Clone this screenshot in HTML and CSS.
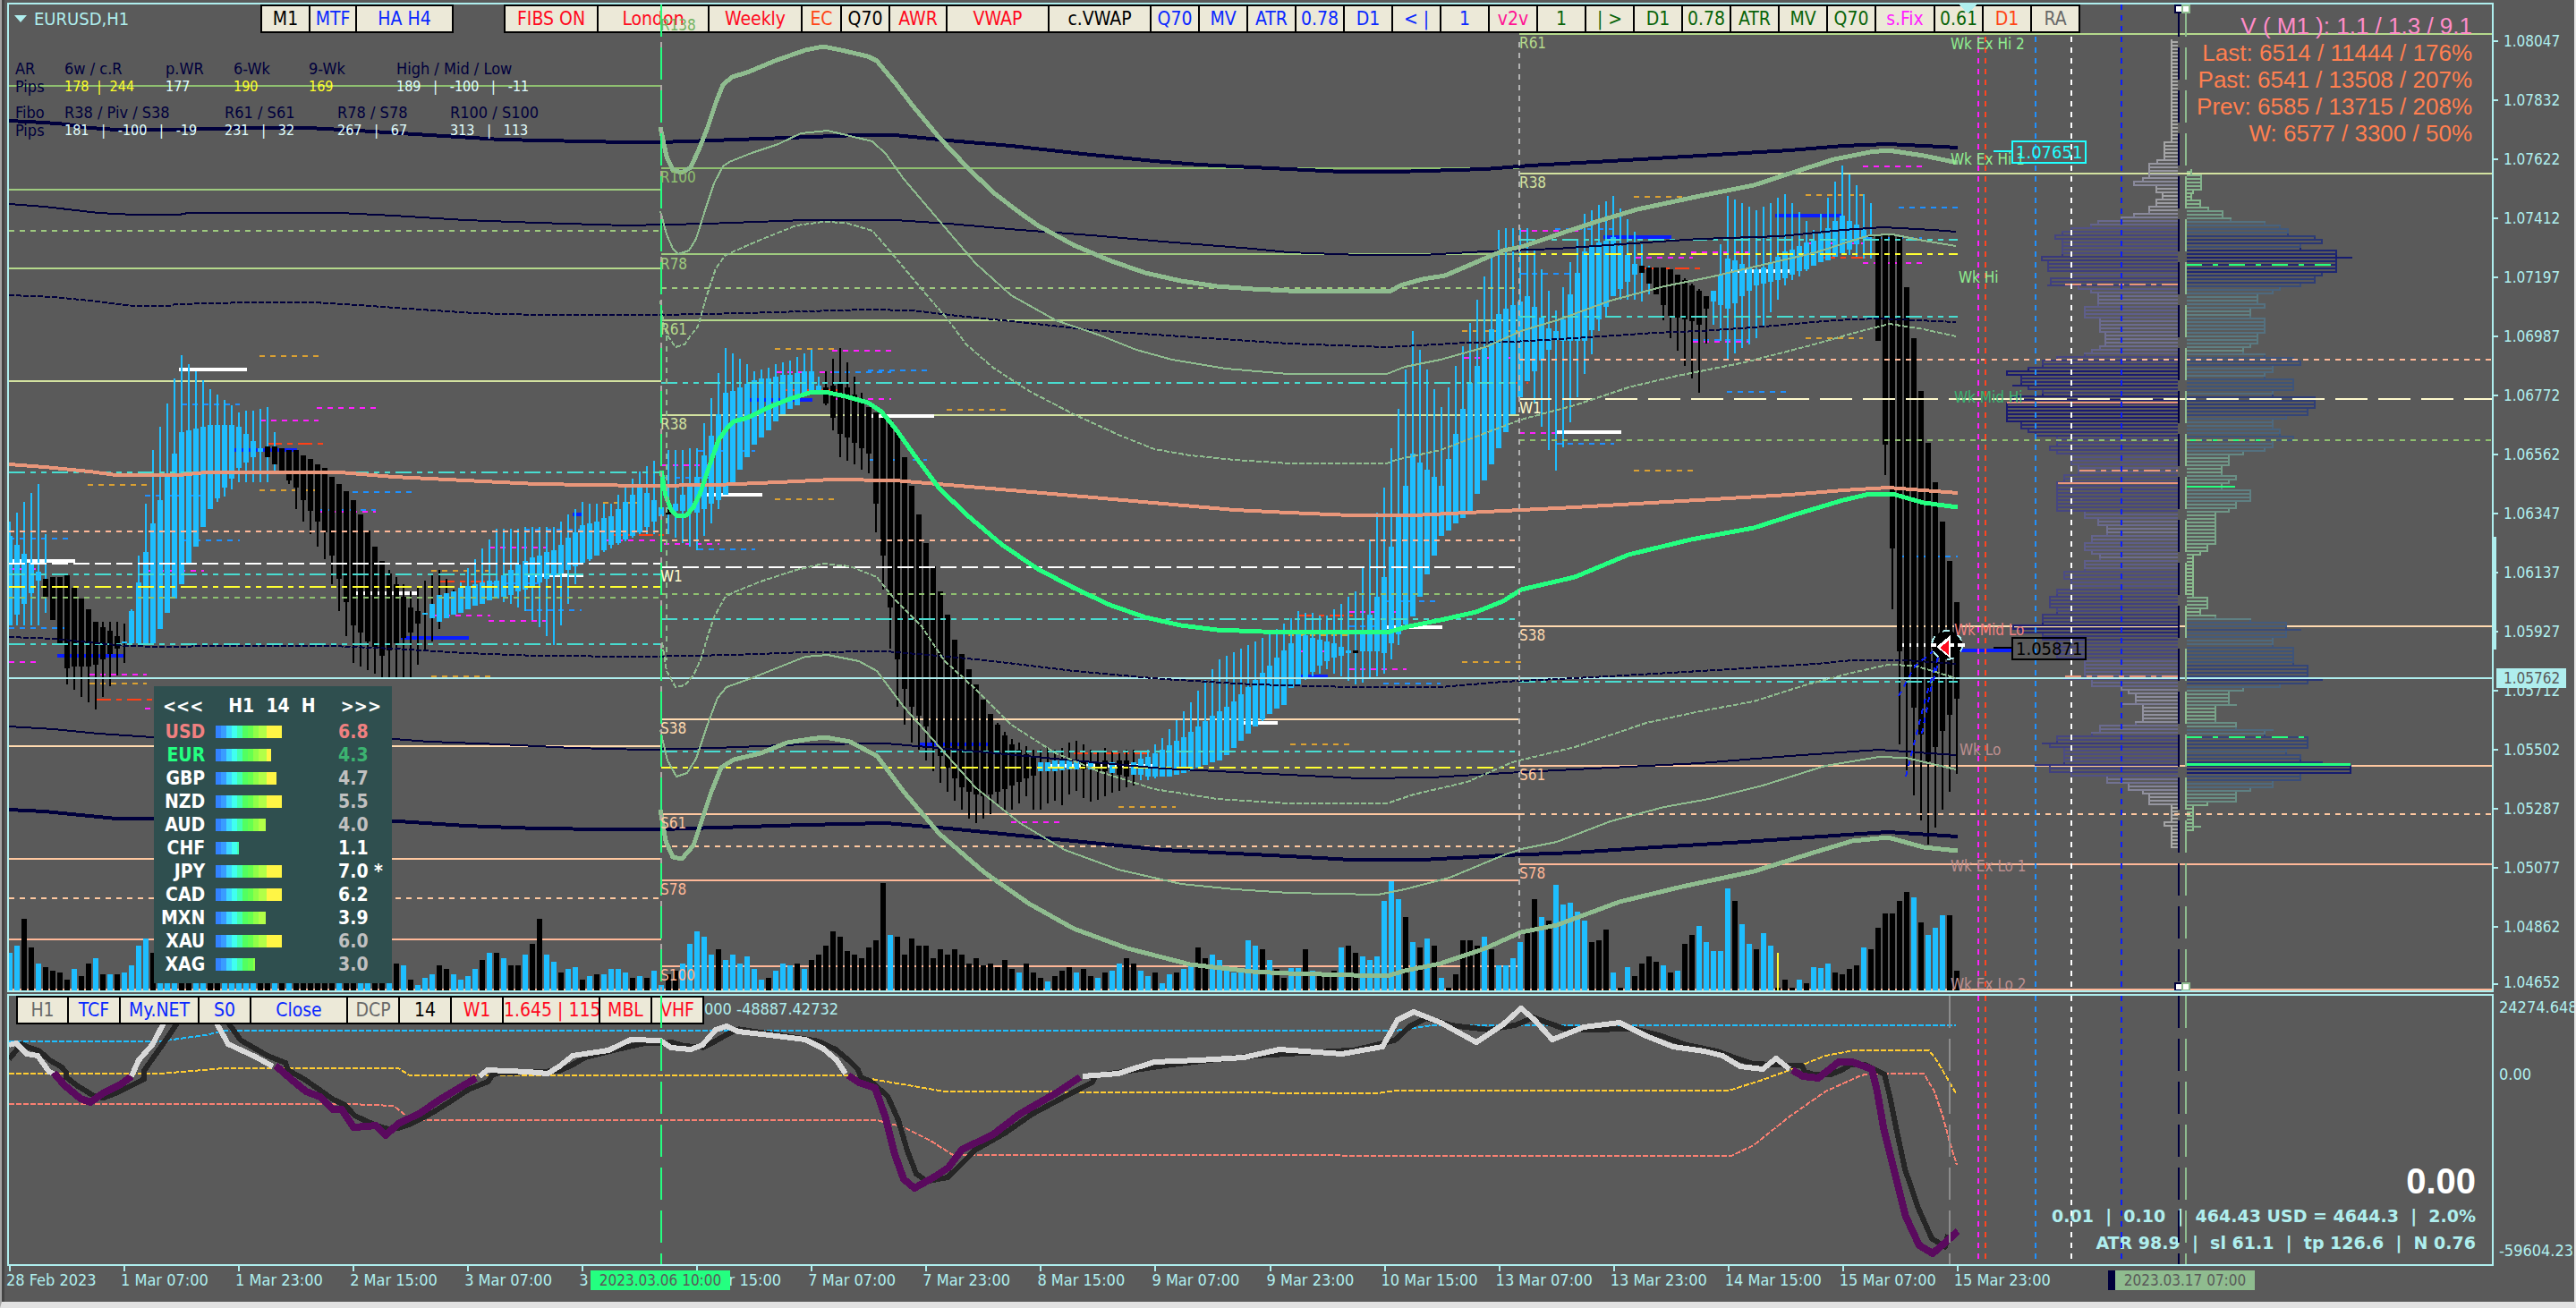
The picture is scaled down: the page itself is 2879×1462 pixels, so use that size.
FILE: index.html
```html
<!DOCTYPE html>
<html lang="en">
<head>
<meta charset="utf-8">
<title>EURUSD,H1</title>
<link rel="stylesheet" href="styles.css">
</head>
<body>
<main class="terminal">
  <section class="pane price-pane" aria-label="EURUSD H1 price chart">
    <div class="toolbar">
      <h1 class="symbol"><span class="caret"></span>EURUSD,H1</h1>
      <div class="group group-tf">
        <button class="b54">M1</button><button class="b52 blue">MTF</button><button class="b108 blue">HA H4</button>
      </div>
      <div class="group">
        <button class="b104 red">FIBS ON</button><button class="b124 red">London</button><button class="b104 red">Weekly</button><button class="b44 orange">EC</button><button class="b54">Q70</button><button class="b64 red">AWR</button><button class="b114 red">VWAP</button><button class="b114">c.VWAP</button><button class="b54 blue">Q70</button><button class="b54 blue">MV</button><button class="b54 blue">ATR</button><button class="b54 blue">0.78</button><button class="b54 blue">D1</button><button class="b54 blue">&lt; |</button><button class="b54 blue">1</button><button class="b54 pink">v2v</button><button class="b54 green">1</button><button class="b54 green">| &gt;</button><button class="b54 green">D1</button><button class="b54 green">0.78</button><button class="b54 green">ATR</button><button class="b54 green">MV</button><button class="b54 green">Q70</button><button class="b66 magenta">s.Fix</button><button class="b54 green">0.61</button><button class="b54 orange">D1</button><button class="b54 grey">RA</button>
      </div>
    </div>
    <svg id="price" class="layer" viewBox="10 5 2775 1102" preserveAspectRatio="none" aria-hidden="true"></svg>
    <div class="ranges">
      <table class="w586">
        <colgroup><col class="c55"><col class="c113"><col class="c76"><col class="c84"><col class="c98"><col class="c160"></colgroup>
        <tr><th>AR</th><th>6w / c.R</th><th>p.WR</th><th>6-Wk</th><th>9-Wk</th><th>High / Mid / Low</th></tr>
        <tr><th>Pips</th><td class="yellow">178&nbsp; |&nbsp; 244</td><td>177</td><td class="yellow">190</td><td class="yellow">169</td><td>189 &nbsp; | &nbsp; -100 &nbsp; | &nbsp; -11</td></tr>
      </table>
      <table class="w646">
        <colgroup><col class="c55"><col class="c179"><col class="c126"><col class="c126"><col class="c160"></colgroup>
        <tr><th>Fibo</th><th>R38 / Piv / S38</th><th>R61 / S61</th><th>R78 / S78</th><th>R100 / S100</th></tr>
        <tr><th>Pips</th><td>181 &nbsp; | &nbsp; -100 &nbsp; | &nbsp; -19</td><td>231 &nbsp; | &nbsp; 32</td><td>267 &nbsp; | &nbsp; 67</td><td>313 &nbsp; | &nbsp; 113</td></tr>
      </table>
    </div>
    <div class="volumes">
      <p class="rose">V ( M1 ): 1.1 / 1.3 / 9.1</p>
      <p>Last: 6514 / 11444 / 176%</p>
      <p>Past: 6541 / 13508 / 207%</p>
      <p>Prev: 6585 / 13715 / 208%</p>
      <p>W: 6577 / 3300 / 50%</p>
    </div>
    <aside class="strength">
      <header><button>&lt;&lt;&lt;</button><span>H1&nbsp; 14&nbsp; H</span><button>&gt;&gt;&gt;</button></header>
      <table>
        <tr class="down"><th>USD</th><td><i class="meter" style="width:74px"></i></td><td>6.8</td></tr>
        <tr class="up"><th>EUR</th><td><i class="meter" style="width:62px"></i></td><td>4.3</td></tr>
        <tr class="dim"><th>GBP</th><td><i class="meter" style="width:68px"></i></td><td>4.7</td></tr>
        <tr class="dim"><th>NZD</th><td><i class="meter" style="width:74px"></i></td><td>5.5</td></tr>
        <tr class="dim"><th>AUD</th><td><i class="meter" style="width:56px"></i></td><td>4.0</td></tr>
        <tr><th>CHF</th><td><i class="meter" style="width:26px"></i></td><td>1.1</td></tr>
        <tr><th>JPY</th><td><i class="meter" style="width:74px"></i></td><td>7.0 *</td></tr>
        <tr><th>CAD</th><td><i class="meter" style="width:74px"></i></td><td>6.2</td></tr>
        <tr><th>MXN</th><td><i class="meter" style="width:56px"></i></td><td>3.9</td></tr>
        <tr class="dim"><th>XAU</th><td><i class="meter" style="width:74px"></i></td><td>6.0</td></tr>
        <tr class="dim"><th>XAG</th><td><i class="meter" style="width:44px"></i></td><td>3.0</td></tr>
      </table>
    </aside>
  </section>

  <div class="price-scale">
    <ol class="prices">
      <li>1.08047</li><li>1.07832</li><li>1.07622</li><li>1.07412</li><li>1.07197</li><li>1.06987</li><li>1.06772</li><li>1.06562</li><li>1.06347</li><li>1.06137</li><li>1.05927</li><li>1.05712</li><li>1.05502</li><li>1.05287</li><li>1.05077</li><li>1.04862</li><li>1.04652</li>
    </ol>
    <span class="grip"></span>
    <output class="bid">1.05762</output>
  </div>

  <section class="pane flow-pane" aria-label="Money flow indicator">
    <svg id="flow" class="layer" viewBox="10 1113 2775 300" preserveAspectRatio="none" aria-hidden="true"></svg>
    <div class="toolbar">
      <div class="group">
        <button class="b57 grey">H1</button><button class="b58 blue">TCF</button><button class="b88 blue">My.NET</button><button class="b58 blue">S0</button><button class="b108 blue">Close</button><button class="b58 grey">DCP</button><button class="b58">14</button><button class="b58 red">W1</button><button class="b108 red">1.645 | 115</button><button class="b58 red">MBL</button><button class="b58 red">VHF</button>
      </div>
      <span class="reading">000 -48887.42732</span>
    </div>
    <div class="account">
      <strong>0.00</strong>
      <p>0.01 &nbsp;|&nbsp; 0.10 &nbsp;|&nbsp; 464.43 USD = 4644.3 &nbsp;|&nbsp; 2.0%</p>
      <p>ATR 98.9 &nbsp;|&nbsp; sl 61.1 &nbsp;|&nbsp; tp 126.6 &nbsp;|&nbsp; N 0.76</p>
    </div>
    <svg id="flow-lines" class="layer" viewBox="10 1113 2775 300" preserveAspectRatio="none" aria-hidden="true"></svg>
  </section>

  <ol class="flow-scale"><li>24274.648</li><li>0.00</li><li>-59604.232</li></ol>

  <div class="time-axis">
    <ol class="times">
      <li>28 Feb 2023</li><li>1 Mar 07:00</li><li>1 Mar 23:00</li><li>2 Mar 15:00</li><li>3 Mar 07:00</li><li>3 Mar 23:00</li><li>6 Mar 15:00</li><li>7 Mar 07:00</li><li>7 Mar 23:00</li><li>8 Mar 15:00</li><li>9 Mar 07:00</li><li>9 Mar 23:00</li><li>10 Mar 15:00</li><li>13 Mar 07:00</li><li>13 Mar 23:00</li><li>14 Mar 15:00</li><li>15 Mar 07:00</li><li>15 Mar 23:00</li>
    </ol>
    <time class="mark mark-start">2023.03.06 10:00</time>
    <time class="mark mark-end">2023.03.17 07:00</time>
  </div>
</main>
<script src="app.js"></script>
</body>
</html>
```
FILE: styles.css
```css
* { box-sizing: border-box; margin: 0; padding: 0; }
body {
  background: #5a5a5a;
  color: #afeeee;
  font: 18px/22px "DejaVu Sans Condensed", "DejaVu Sans", sans-serif;
}
ol { list-style: none; }

.terminal {
  display: grid;
  grid-template-columns: minmax(0, 1fr) 90px;
  grid-template-rows: minmax(0, 1106fr) minmax(0, 306fr) 40px;
  height: 100vh;
  min-height: 900px;
  padding: 3px 0 0 6px;
  border-left: 2px solid #a4a4a4;
  border-right: 2px solid #e8e8e8;
  border-bottom: 7px solid #e2e2e2;
  box-shadow: inset 3px 0 #444;
  overflow: hidden;
}
.pane { display: grid; border: 2px solid #afeeee; overflow: hidden; }
.pane > * { grid-area: 1 / 1; min-width: 0; min-height: 0; }
.flow-pane { margin-top: 2px; }
.layer { width: 100%; height: 100%; pointer-events: none; shape-rendering: crispEdges; }
.layer text { font: 17px "DejaVu Sans Condensed", "DejaVu Sans", sans-serif; }

/* toolbars */
.toolbar { display: flex; align-self: start; height: 32px; }
.symbol { display: flex; align-items: center; gap: 8px; flex: 0 0 281px; padding-left: 6px; font-size: 20px; font-weight: normal; }
.caret { border: 7px solid transparent; border-top: 8px solid #afeeee; border-bottom: 0; }
.group { display: flex; border-right: 2px solid #000; }
.group-tf { margin-right: 56px; }
.flow-pane .group { margin-left: 8px; }
.group button {
  flex: none;
  border: 2px solid #000;
  border-right: 0;
  background: #ece9d8;
  color: #000;
  font: 21px/24px "DejaVu Sans Condensed", "DejaVu Sans", sans-serif;
  white-space: nowrap;
}
.group .blue { color: #0a28ff; }
.group .red { color: #ff0a1e; }
.group .orange { color: #ff4516; }
.group .pink { color: #ff1493; }
.group .green { color: #0a640a; }
.group .magenta { color: #ff20ff; }
.group .grey { color: #696969; }
.b44 { width: 44px; } .b52 { width: 52px; } .b54 { width: 54px; } .b57 { width: 57px; }
.b58 { width: 58px; } .b64 { width: 64px; } .b66 { width: 66px; } .b88 { width: 88px; }
.b104 { width: 104px; } .b108 { width: 108px; } .b114 { width: 114px; } .b124 { width: 124px; }
.reading { padding-top: 4px; }

/* weekly ranges */
.ranges { display: grid; gap: 9px; align-content: start; justify-self: start; padding: 62px 0 0 7px; }
.ranges table { table-layout: fixed; border-collapse: collapse; }
.ranges th, .ranges td { height: 20px; text-align: left; font-weight: normal; white-space: nowrap; line-height: 20px; }
.ranges th { color: #00003c; font-size: 18px; }
.ranges td { color: #e0ffff; font-size: 16px; }
.ranges .yellow { color: #ffff28; }
.w586 { width: 586px; } .w646 { width: 644px; }
.c55 { width: 55px; } .c76 { width: 76px; } .c84 { width: 84px; } .c98 { width: 98px; } .c113 { width: 113px; }
.c126 { width: 126px; } .c160 { width: 160px; } .c179 { width: 179px; }

/* volume read-out */
.volumes { justify-self: end; padding: 9px 22px 0 0; text-align: right; color: #ff7f50; font: 26px/30px "Liberation Sans", sans-serif; }
.volumes .rose { color: #ff8cc8; }

/* currency strength */
.strength { align-self: end; justify-self: start; width: 266px; margin: 0 0 8px 162px; padding: 10px 10px 8px 8px; background: #2f4f4f; color: #fff; font-weight: bold; font-size: 21px; line-height: 26px; }
.strength header { display: flex; justify-content: space-between; padding: 0 2px 4px 2px; line-height: 24px; }
.strength button { border: 0; background: none; color: #fff; font: bold 20px/24px "DejaVu Sans Condensed", sans-serif; }
.strength table { width: 100%; border-collapse: collapse; }
.strength th { width: 46px; text-align: right; }
.strength tr { height: 26px; }
.strength td { line-height: 26px; }
.strength td:nth-child(2) { width: 152px; padding-left: 12px; }
.strength td:nth-child(3) { white-space: nowrap; }
.meter { display: block; height: 14px; background: linear-gradient(90deg, #3282ff 6px, #3a9cff 6px 12px, #3ed8ff 12px 18px, #40fff0 18px 24px, #42ffb0 24px 30px, #52ff60 30px 36px, #66ff50 36px 42px, #90ff48 42px 48px, #b2ff48 48px 57px, #fff545 57px); }
.down { color: #f08080; }
.up th { color: #24ff80; }
.up td { color: #3cb371; }
.dim td { color: #c0c0c0; }

/* account line */
.account { align-self: end; justify-self: end; padding: 0 18px 9px 0; text-align: right; font: bold 19px/30px "DejaVu Sans", sans-serif; white-space: nowrap; }
.account strong { display: block; color: #fff; font: bold 40px/48px "Liberation Sans", sans-serif; }

/* scales */
.price-scale { position: relative; overflow: hidden; }
.prices { display: grid; grid-template-rows: 10fr repeat(16, 66fr) 40fr; height: 100%; font-size: 17px; }
.prices::before { content: ""; }
.prices li { display: flex; align-items: center; gap: 6px; }
.prices li::before { content: ""; width: 5px; height: 2px; background: #afeeee; }
.prices li:last-child { align-items: end; }
.prices li:last-child::before { margin-bottom: 8px; }
.grip { position: absolute; left: 0; top: 54%; width: 3px; height: 126px; background: #afeeee; }
.bid { position: absolute; left: 3px; top: 67%; width: 78px; padding: 0 8px; margin-top: 3px; background: #afeeee; color: #5a5a5a; font-size: 17px; }
.flow-scale { display: grid; grid-template-rows: 6fr 22fr 53fr 22fr 175fr 22fr 6fr; overflow: hidden; padding-left: 6px; }
.flow-scale li:nth-child(1) { grid-row: 2; }
.flow-scale li:nth-child(2) { grid-row: 4; }
.flow-scale li:nth-child(3) { grid-row: 6; }

.time-axis { display: grid; grid-column: 1 / -1; margin-right: 90px; }
.time-axis > * { grid-area: 1 / 1; }
.times { display: grid; grid-template-columns: repeat(21, 128fr) 90fr; }
.times li { padding-top: 5px; text-indent: -1px; white-space: nowrap; background: linear-gradient(#afeeee, #afeeee) 2px 0 / 2px 6px no-repeat; }
.mark { justify-self: start; align-self: start; width: 156px; height: 22px; margin-top: 5px; text-align: center; font-size: 17px; color: #5a5a5a; }
.mark-start { margin-left: 652px; background: #24ff80; }
.mark-end { justify-self: end; margin-right: 267px; background: #8fbc8f; box-shadow: -8px 0 #00003c; }
```
FILE: app.js
```js
const NS = "http://www.w3.org/2000/svg";
const C = {
  sky: "#1ebeff", black: "#000", navy: "#00003c", sage: "#8fbc8f", salmon: "#e9967a", spring: "#24ff80",
  aqua: "#afeeee", teal: "#48dcd0", yellow: "#ffff32", magenta: "#ff20ff", gold: "#daa032", dodger: "#1e90ff",
  red: "#ff4016", blue: "#0a1eff", white: "#fff", cream: "#fffacd",
  g1: "#8fc070", g2: "#9fcb7f", g3: "#b5d98c", g4: "#d3e2a0",
  p1: "#ffdab0", p2: "#ffc8a0", p3: "#ffb898"
};
const DASH = "6 6", DOT = "18 6 6 6 6 6", LONG = "18 6";

function make(svg, tag, attrs, text) {
  const el = document.createElementNS(NS, tag);
  for (const k in attrs) if (attrs[k] !== undefined) el.setAttribute(k, attrs[k]);
  if (text) el.textContent = text;
  svg.appendChild(el);
  return el;
}
const line = (svg, x1, y1, x2, y2, stroke, width = 2, dash) =>
  make(svg, "line", { x1, y1, x2, y2, stroke, "stroke-width": width, "stroke-dasharray": dash });
const curve = (svg, pts, stroke, width, dash) =>
  make(svg, "polyline", { points: pts, fill: "none", stroke, "stroke-width": width, "stroke-dasharray": dash, "stroke-linejoin": "round" });
const box = (svg, x, y, width, height, fill) => make(svg, "rect", { x, y, width, height, fill });

const price = document.getElementById("price");
const LEFT = 10, MON6 = 739, MON13 = 1698, NOW = 2188, RIGHT = 2785, FLOOR = 1107, STEP = 8;
const barX = i => 11 + i * STEP;

/* weekly pivots, solid */
[
  [LEFT, MON6, 96, "g1"], [LEFT, MON6, 212, "g2"], [LEFT, MON6, 300, "g3"], [LEFT, MON6, 426, "g4"],
  [LEFT, MON6, 834, "p1"], [LEFT, MON6, 960, "p2"], [LEFT, MON6, 1050, "p3"],
  [MON6, MON13, 188, "g1"], [MON6, MON13, 284, "g2"], [MON6, MON13, 358, "g3"], [MON6, MON13, 464, "g4"],
  [MON6, MON13, 804, "p1"], [MON6, MON13, 910, "p2"], [MON6, MON13, 984, "p3"], [MON6, MON13, 1080, "p3"],
  [MON13, RIGHT, 38, "g3"], [MON13, RIGHT, 194, "g4"], [MON13, RIGHT, 700, "p1"], [MON13, RIGHT, 856, "p2"],
  [MON13, RIGHT, 966, "p3"], [LEFT, RIGHT, 1106, "p3"]
].forEach(([a, b, y, c]) => line(price, a, y, b, y, C[c]));

/* session levels: colour, from, to, y */
const levels = `g 290 356 398|w 200 276 413|d 203 268 452|m 291 356 470|m 354 420 456|r 299 364 496|b 262 332 503|g 98 164 542
d 162 226 554|g 290 352 548|d 394 460 550|d 355 420 570|m 357 420 572|d 10 77 602|d 206 268 604|w 10 84 627|m 10 40 636|m 165 228 638
w 397 466 663|b 448 524 713|d 10 72 702|b 64 138 733|m 485 548 688|m 546 610 694|g 482 547 638|r 492 550 650|m 547 610 612|d 586 648 592
b 640 650 575|w 590 652 643|d 550 610 652|d 588 650 682|g 674 720 562|r 680 748 598|m 678 738 604|m 10 40 740|m 100 164 754|g 100 164 764
r 108 172 782|m 162 172 792|g 482 548 756|g 866 932 390|m 930 996 392|m 868 930 416|d 932 996 416|d 970 1036 414|r 878 936 436|b 838 908 447
m 934 996 446|g 1058 1124 458|w 974 1044 465|d 780 844 504|m 740 804 520|d 742 802 534|d 972 1036 514|w 786 852 553|g 866 932 558
m 742 804 608|d 780 844 614|m 1700 1764 258|d 1738 1802 256|g 1826 1880 220|b 1792 1868 265|m 1828 1892 288|m 1890 1954 282|r 1838 1900 300
d 1700 1764 306|m 2082 2148 186|g 2018 2082 218|d 2122 2188 232|b 1984 2058 241|d 2085 2148 266|m 2020 2082 272|r 2035 2092 288
m 2082 2148 294|w 1935 2002 303|d 1892 1956 380|m 1892 1955 382|g 1634 1698 370|g 2018 2082 378|m 1636 1698 400|r 1650 1708 428
m 1698 1740 484|w 1738 1812 483|d 1740 1804 496|g 1826 1892 526|d 1930 1996 438|d 1550 1610 672|m 1508 1570 684|d 1508 1550 700
r 1452 1512 688|w 1550 1612 701|g 1440 1506 710|m 1440 1500 728|b 1448 1484 756|m 1508 1572 748|d 1546 1610 764|g 1634 1700 740
g 1442 1508 832|d 2126 2188 622|w 2126 2196 721|w 1387 1428 808|b 1028 1104 832|w 1170 1290 856|m 1130 1190 919|g 1250 1314 902|r 1200 1290 842`;
const levelStyle = { g: ["gold", 2, DASH], m: ["magenta", 2, DASH], d: ["dodger", 2, DASH], r: ["red", 2, "16 6 6 6"], w: ["white", 4], b: ["blue", 4] };
levels.split(/[|\n]/).forEach(s => {
  const [k, a, b, y] = s.split(" ");
  const [c, w, d] = levelStyle[k];
  line(price, a, y, b, y, C[c], w, d);
});

/* tick volume: bar height above the floor, b = up bar, k = down bar */
const volume = `b42 b50 k80 k48 b30 k26 k22 k20 k12 b24 k16 k30 b36 k18 b18 k18 b20 b28 b50 b58 k42 b20 b20 b20 k20 k20 b20 b20 k20 k20 b20 b20 b20 b8
b14 k20 k20 b20 k20 b20 k20 k20 k20 k20 k20 k20 b20 k20 k20 b20 b20 k20 k20 b20 k30 b28 k12 b6 b14 b18 k28 k24 b18 b12 b16 b24 k34 b42 k42 b36 k28
k28 b40 k52 k80 b40 b32 k20 b24 b26 k12 b16 k18 b18 b24 b24 b20 k14 b16 k14 b22 b6 k18 k22 b30 b52 b66 b60 b40 k46 b34 b40 b30 b38 b24 b12 k14 b22
b30 b28 k30 b24 k34 k40 k50 k66 k60 k44 k40 k36 k48 k56 k120 b62 k60 k40 k58 k50 k50 k36 k46 k40 k46 k40 k30 k36 k28 k30 k26 k34 k24 b20 k30 k20 k14
b10 k16 k22 k26 b20 k24 k16 b14 k20 b22 b30 k36 k30 b22 b16 k20 b8 b18 k20 b24 b30 k48 k36 b40 b34 b26 b20 b24 b56 b50 k46 b34 k24 k14 b12 k38 b34
b48 b38 b30`.split(/\s+/).slice(0, 179);
const later = `b25 b25 k46 b22 k16 k16 k22 b48 k50 k42 b38 b34 b38 b100 b122 b102 k82 b54 k48 b58 k50 b14 k3 k18 k56 k56 k50 b60 k46 b28 b28 b36 b54
k66 k102 b82 k78 b118 b96 b98 b88 b78 k54 k56 k68 b20 k3 b26 k16 k30 k38 k32 b28 k20 b22 k52 k62 b72 b54 b44 b44 b114 k100 b74 b52 k46 b64 b50
k3 k12 k3 b12 k8 b26 b25 b30 k20 k18 k24 k28 b48 k46 k70 k86 k86 k100 k110 b104 k76 b62 b70 b84 k84 k22`.split(/\s+/);
const drawVolume = (v, i) => box(price, barX(i) - 3, FLOOR - v.slice(1), 6, v.slice(1), v[0] === "b" ? C.sky : C.black);
while (volume.length < 179) volume.push("b24");
volume.concat(later).slice(0, 273).forEach(drawVolume);
line(price, 1987, 1065, 1987, FLOOR, C.yellow);

/* candles: wick top, body top, body bottom, wick bottom.
   b = up, k = down, x = down body on an up wick, y = up body on a down wick */
const blocks = [
  { base: 370, unit: 3, rows: `b638,686,986,986 b608,716,950,986 b572,746,914,986 b542,776,878,986 b512,806,836,986 x680,830,890,944 k824,824,968,968
k824,824,1046,1046 k818,818,1130,1184 k860,860,1124,1202 k896,896,1124,1226 k932,932,1124,1244 k974,974,1118,1268 k974,992,1100,1226
k974,1004,1082,1190 k974,1022,1064,1154 y980,1040,1046,1112 b932,938,1046,1046 b752,842,1046,1046 b578,740,1046,1046 b398,644,1046,1046
b320,566,998,998 b242,488,944,944 b158,410,896,896 b80,338,848,848 b110,332,776,776 b134,326,722,722 b164,320,656,656 b194,314,596,596
b212,314,560,572 b230,314,524,554 b248,314,494,530 b272,320,458,506 b266,344,440,506 b266,368,422,506 b260,392,404,506 x254,386,422,506
x338,386,446,470 k392,392,470,470 k398,398,500,512 k398,398,524,596 k416,416,566,638 k428,428,602,680 k446,446,638,722 k458,458,674,764
k488,488,752,848 k512,512,830,938 k536,536,908,1022 k566,566,986,1112 k614,614,1010,1124 k668,668,1040,1136 k722,722,1058,1148
k770,770,1088,1160 k800,812,1070,1160 k824,848,1046,1160 k848,890,1028,1160 k872,926,1010,1160 k860,938,980,1118 y836,944,950,1070
y818,914,962,1040 y800,884,974,998 y830,878,962,962 y866,872,950,950 b842,860,944,944 b794,854,932,932 b764,848,920,920 b728,842,914,914
b698,836,902,902 b662,836,896,896 b662,818,890,908 b662,800,884,914 b662,782,872,926 b656,770,866,938 b656,758,854,968 b656,752,842,992
b656,740,830,1022 b656,734,818,1052 b638,716,812,986 b614,692,800,914 b596,674,788,848 b572,650,776,776 b578,644,764,770 b578,638,752,752
b578,626,734,740 b578,620,716,728 b548,596,710,716 b524,572,698,704 b494,548,686,692 b470,524,674,680 b452,542,656,680 b434,566,638,680
b470,590,620,630 x398,596,614,680 b398,578,602,692 b398,548,602,710 b392,520,605,722 b392,488,608,734 b308,416,596,686 b224,350,578,644
b140,278,566,596 b56,206,548,548 b74,200,506,506 b92,188,464,464 b110,176,422,422 b134,164,380,380 b128,158,356,356 b122,158,332,332
b110,152,302,302 b104,146,278,278 b98,146,260,260 b86,140,248,248 b74,134,215,215 b62,134,210,210 b152,182,212,212 k134,188,242,248
k92,182,290,332 k56,176,344,422 k104,188,356,434 k152,212,374,446 k206,230,392,464 k254,254,410,476 k272,272,578,674 k290,290,752,866
k300,300,926,1064` },
  { base: 0, unit: 1, rows: `k483,483,737,790 k511,511,770,810 k543,543,790,830 k575,575,800,838 k607,607,812,850 k633,633,830,862 k661,661,845,875
k687,687,858,885 k715,715,870,895 k731,731,880,905 k748,748,885,915 k765,765,888,920 k782,782,890,915 k798,798,888,910 k808,810,885,900
k818,822,882,905 k826,832,878,905 k830,838,874,898 k834,843,870,890 k838,846,867,905 y838,852,862,905 y836,852,862,898 y838,850,862,895
y836,850,861,900 y830,850,860,888 y828,850,860,884 k832,852,860,892 y838,852,860,896 k840,852,862,894 k836,850,862,890 y840,852,864,886
k842,850,866,884 k838,850,868,880 y838,852,866,878 b840,848,866,872 b838,846,868,872 b832,842,868,870 b825,838,868,868 b815,833,868,868
b805,828,866,866 b795,824,864,864 b785,818,862,862 b772,812,858,858 b760,806,855,855 b748,800,852,852 b737,795,850,850 b733,790,844,844
b729,784,836,836 b725,776,828,828 b721,768,820,820 b717,760,812,812 b713,752,804,806 b709,744,798,798 b703,735,792,792 b697,727,788,788` },
  { base: 370, unit: 2.148, rows: `b690,750,856,856 b672,724,848,848 b677,731,832,838 b677,737,818,830 b682,741,804,822 b682,745,793,813 b668,750,784,822
b655,758,780,830 b638,767,774,840 x625,767,774,848 b568,718,770,844 b500,681,770,835 b436,638,770,830 b376,591,774,822 b281,518,750,788
b187,440,728,754 b93,372,705,718 b0,295,685,685 b45,316,638,638 b92,333,585,585 b140,350,539,539 b183,372,492,492 b135,307,478,478
b84,247,461,461 b37,187,448,448` },
  { base: 0, unit: 1, rows: `b361,428,571,571 b335,409,552,552 b309,389,537,537 b283,368,519,519 b257,351,501,501 b255,345,483,483 b255,341,463,463
b255,337,444,444 b255,331,426,426 b279,343,415,451 b301,355,403,477 b325,367,391,503 b347,370,380,526 b321,357,381,500 b293,329,381,472
b269,305,381,444 b239,281,381,418 b235,275,369,396 b229,271,357,370 b225,269,343,353 b219,265,331,331 b233,275,323,335 b245,285,315,335
b259,295,307,335 x273,297,305,337 x297,299,317,329 k299,299,329,329 k299,299,341,358 k301,301,353,378 k307,307,355,392 k311,313,357,409
k317,319,359,423 k323,325,363,439 k331,331,345,384 b325,325,337,363 b273,307,341,381 b219,289,345,403 b223,291,339,395 b227,295,331,389
b231,299,325,385 b235,301,319,378 b231,299,317,365 b227,293,315,349 b221,287,313,335 b217,281,311,319 b227,279,307,313 b237,275,303,309
b247,271,301,303 b257,269,297,297 b239,261,293,293 b221,255,291,291 b203,247,287,287 b185,241,283,283 b195,247,279,285 b207,251,273,287
b217,257,267,289 x227,263,265,289 k263,263,381,381 k263,263,497,531 k263,263,613,681 k265,265,728,832 k321,321,760,861 k378,378,791,889
k437,437,821,917 k495,495,851,944 k539,539,835,925 k583,583,817,905 k627,627,799,885 k673,673,781,865` }
];
let bar = 0;
for (const { base, unit, rows } of blocks) {
  for (const row of rows.split(/\s+/)) {
    const [wt, bt, bb, wb] = row.slice(1).split(",").map(v => Math.round(base + v / unit));
    const x = barX(bar++);
    box(price, x - 1, wt, 2, wb - wt, "bx".includes(row[0]) ? C.sky : C.black);
    box(price, x - 3, bt, 6, Math.max(2, bb - bt), "by".includes(row[0]) ? C.sky : C.black);
  }
}

/* volume profiles: y,width pairs */
function profile(spec, origin, dir, near, far, reach) {
  const pts = spec.split(" ").map(p => p.split(",").map(Number));
  const widthAt = y => {
    let w = pts[0][1];
    for (const p of pts) { if (p[0] > y) break; w = p[1]; }
    return w;
  };
  let prev = 0;
  for (let y = pts[0][0]; y <= pts[pts.length - 1][0]; y += 4) {
    const w = widthAt(y), t = Math.min(1, w / reach);
    const c = near.map((n, i) => Math.round(n + (far[i] - n) * t));
    const fill = `rgb(${c})`;
    box(price, dir < 0 ? origin - w : origin, y, w, 2, fill);
    const m = Math.min(prev || w, w);
    box(price, dir < 0 ? origin - m : origin + m - 2, y - 2, 2, 4, fill);
    prev = w;
  }
}
profile("46,8 155,8 158,16 176,16 178,24 182,33 192,33 196,40 200,50 208,40 210,25 216,25 218,18 222,25 228,33 235,50 242,64 246,90 250,98 252,120 258,130 262,138 270,130 275,112 278,130 283,153 290,153 292,146 303,146 306,120 310,143 316,146 320,112 326,98 330,90 338,90 342,105 354,105 358,88 373,82 383,88 389,97 393,105 396,136 402,152 408,168 413,192 418,192 422,176 427,185 434,168 438,152 440,185 450,192 468,192 473,176 480,168 485,160 490,136 498,144 505,136 510,120 520,112 530,128 538,136 565,136 572,105 582,90 590,80 598,97 605,105 615,97 620,88 625,105 633,105 638,128 645,128 650,120 655,136 663,144 672,144 680,136 686,152 692,152 697,185 704,176 710,152 716,136 735,105 750,105 756,128 762,97 768,64 772,56 776,48 783,64 790,40 798,40 804,48 810,88 818,97 822,136 828,152 832,144 838,128 848,128 852,160 858,144 864,120 868,80 876,56 884,40 890,33 898,33 901,8 916,16 924,16 926,8 946,8",
  2434, -1, [176, 176, 170], [26, 26, 112], 192);
profile("191,6 195,17 208,17 212,8 218,6 222,16 228,25 234,41 240,50 244,88 248,105 255,114 260,144 266,152 272,144 275,128 278,168 284,185 288,168 302,168 306,152 310,144 316,128 320,105 326,97 330,80 338,88 346,72 352,88 372,80 385,72 390,64 395,88 397,120 402,128 408,97 416,88 422,120 434,120 438,97 440,144 452,144 458,136 464,112 470,97 478,105 485,120 492,97 500,88 505,64 508,48 518,48 523,40 528,56 536,48 540,40 545,72 556,72 562,56 570,48 572,33 604,33 608,24 616,16 620,8 658,8 664,24 678,24 682,16 685,33 690,72 694,112 700,128 705,112 712,97 720,120 740,136 752,136 756,152 760,136 765,105 770,64 774,48 784,56 788,33 800,33 804,56 812,97 818,88 822,136 832,136 836,112 842,128 848,152 852,184 860,184 864,168 867,128 874,97 880,72 886,56 894,56 899,24 901,8 916,8 921,16 926,8 928,8",
  2444, 1, [143, 195, 143], [22, 28, 112], 180);
[[2308, 2434, 318, "18 6 6 6"], [2243, 2434, 450], [2324, 2434, 526, "18 6 6 6"], [2300, 2434, 540], [2308, 2434, 756, "18 6 6 6"]]
  .forEach(([a, b, y, d]) => line(price, a, y, b, y, C.salmon, 2, d));
[[2443, 2605, 296, 2, "18 12 6 12"], [2443, 2527, 492, 2, "18 12 6 12"], [2443, 2498, 544, 2], [2443, 2575, 824, 2, "18 12 6 12"], [2443, 2627, 854, 3]]
  .forEach(([a, b, y, w, d]) => line(price, a, y, b, y, C.spring, w, d));

/* dashed levels over the candles */
[
  [LEFT, MON6, 258, "g2", DASH], [LEFT, MON6, 528, "teal", DOT], [LEFT, MON6, 594, "p3", DASH], [LEFT, MON6, 630, "white", LONG],
  [LEFT, MON6, 642, "teal", DOT], [LEFT, MON6, 656, "yellow", DOT], [LEFT, MON6, 668, "g1", DASH], [LEFT, MON6, 720, "teal", DOT],
  [LEFT, MON6, 1004, "p2", DASH],
  [MON6, MON13, 322, "g2", DASH], [MON6, MON13, 428, "teal", DOT], [MON6, MON13, 604, "p3", DASH], [MON6, MON13, 634, "white", LONG],
  [MON6, MON13, 664, "g1", DASH], [MON6, MON13, 692, "teal", DOT], [MON6, MON13, 840, "teal", DOT], [MON6, MON13, 858, "yellow", DOT],
  [MON6, MON13, 946, "p2", DASH],
  [MON13, NOW, 268, "teal", DOT], [MON13, NOW, 284, "yellow", DOT], [MON13, NOW, 354, "teal", DOT], [MON13, NOW, 762, "teal", DOT],
  [MON13, RIGHT, 402, "p3", DASH], [MON13, RIGHT, 446, "cream", "36 12"], [MON13, RIGHT, 492, "g1", DASH], [MON13, RIGHT, 910, "p2", DASH],
  [LEFT, RIGHT, 758, "aqua"]
].forEach(([a, b, y, c, d]) => line(price, a, y, b, y, C[c], 2, d));

/* moving VWAP bands */
const THIN = "6 2";
[
  ["10,135 50,137 75,139 100,143 130,145 200,145 280,143 345,143 400,146 480,151 560,156 700,159 738,159 795,157 880,154 960,151 1000,151 1060,157 1130,163 1210,172 1290,180 1340,184 1400,187 1440,189 1500,192 1560,192 1660,189 1710,185 1800,180 1900,174 2000,168 2060,163 2110,161 2150,163 2188,165", "navy", 4],
  ["10,228 50,231 110,238 150,240 200,240 210,238 380,238 440,241 520,246 600,249 700,252 790,250 900,246 1000,246 1060,250 1140,257 1220,263 1300,270 1400,278 1440,282 1520,285 1590,285 1660,281 1740,278 1840,271 1900,267 1990,264 2060,257 2105,254 2160,257 2186,259", "navy", 2],
  ["10,330 60,332 100,336 150,342 190,342 195,340 280,338 350,338 400,341 470,346 530,350 600,352 738,352 830,350 900,348 970,346 1020,347 1070,353 1140,360 1220,369 1290,374 1350,378 1440,384 1550,388 1640,383 1690,382 1760,378 1850,372 1900,370 1960,366 2050,358 2100,356 2186,360", "navy", 2, THIN],
  ["10,712 60,714 100,718 140,722 180,723 250,722 370,722 440,725 520,730 600,733 720,734 820,732 900,729 990,728 1060,734 1110,739 1200,750 1300,759 1400,765 1510,768 1610,768 1680,762 1760,758 1850,753 1950,747 2030,742 2070,738 2130,738 2186,742", "navy", 2, THIN],
  ["10,812 60,815 110,820 170,824 440,826 480,829 560,832 640,836 720,838 800,836 900,832 990,831 1060,837 1200,850 1300,859 1440,866 1520,870 1600,869 1700,863 1800,858 1900,853 2000,845 2100,838 2186,844", "navy", 2],
  ["10,905 50,907 90,911 130,915 430,917 460,919 520,923 600,926 680,927 738,927 900,922 990,920 1060,926 1200,940 1300,950 1440,957 1510,961 1590,961 1680,956 1760,953 1850,947 1950,941 2050,934 2110,930 2188,935", "navy", 4],
  ["738,142 745,175 752,190 762,193 772,187 782,165 790,145 800,115 808,95 818,86 835,81 866,68 900,56 920,52 940,56 970,63 980,68 1000,92 1020,118 1050,154 1080,186 1110,215 1140,238 1160,252 1200,274 1240,291 1280,305 1320,314 1360,320 1400,323 1440,325 1555,325 1565,319 1590,312 1615,308 1650,293 1680,280 1700,276 1730,266 1750,259 1790,246 1830,234 1900,219 1960,207 2000,194 2050,178 2090,170 2110,168 2150,174 2188,182", "sage", 5],
  ["738,236 745,262 752,278 758,284 770,280 778,267 788,235 798,205 808,186 815,181 840,171 870,161 895,149 925,146 950,152 975,158 990,172 1010,200 1050,247 1090,294 1130,330 1180,358 1230,375 1270,391 1310,402 1370,412 1440,418 1550,418 1570,410 1610,402 1660,388 1700,370 1740,358 1800,336 1860,320 1910,310 1970,296 2030,282 2070,269 2090,263 2115,262 2150,269 2186,275", "sage", 2],
  ["738,336 742,365 748,378 755,388 765,385 772,375 780,365 790,330 800,300 810,286 820,281 850,268 890,252 920,248 945,249 975,258 1000,287 1030,323 1060,358 1080,385 1110,411 1150,437 1200,463 1250,486 1290,502 1330,509 1380,514 1440,518 1550,518 1560,514 1610,503 1660,484 1700,469 1760,453 1820,433 1870,421 1950,405 2020,387 2080,370 2112,362 2150,368 2186,376", "sage", 2, THIN],
  ["740,718 745,750 755,768 765,766 775,755 784,735 790,714 798,690 810,668 820,662 850,650 890,637 920,630 950,633 980,645 1000,670 1030,700 1055,738 1090,770 1130,810 1180,842 1230,863 1290,882 1360,893 1440,898 1550,898 1580,888 1640,874 1690,852 1760,835 1840,808 1900,795 1960,784 2020,765 2070,752 2110,743 2140,744 2186,758", "sage", 2, THIN],
  ["738,816 746,850 756,868 768,864 778,848 790,812 802,780 812,768 840,758 870,746 900,734 925,732 960,739 980,750 1010,790 1050,835 1090,880 1140,920 1190,950 1250,972 1320,988 1380,994 1440,998 1540,1000 1570,994 1620,981 1680,956 1700,949 1740,941 1800,918 1860,902 1910,893 1970,878 2040,856 2100,846 2130,847 2160,854 2186,860", "sage", 2],
  ["738,905 744,940 752,958 762,960 775,945 785,915 795,885 806,858 820,849 850,842 880,830 905,826 922,824 950,829 980,845 1010,885 1050,932 1100,975 1150,1010 1200,1038 1260,1060 1330,1078 1400,1086 1440,1088 1550,1091 1570,1085 1610,1077 1660,1060 1700,1042 1740,1034 1810,1008 1880,991 1960,974 2030,952 2070,940 2110,936 2150,947 2188,951", "sage", 5],
  ["10,519 50,522 100,527 130,531 200,531 230,528 380,528 440,533 520,537 600,541 720,543 800,542 870,539 930,536 1000,537 1060,542 1130,548 1210,555 1300,563 1380,570 1440,573 1510,576 1580,576 1660,572 1760,567 1880,560 2000,553 2060,548 2110,545 2150,548 2188,551", "salmon", 4],
  ["739,526 744,554 750,570 757,577 767,576 775,567 783,550 793,520 803,492 813,478 820,471 835,467 860,455 885,445 905,439 922,438 945,443 970,450 985,460 1000,478 1025,513 1050,546 1080,575 1120,609 1160,636 1200,657 1240,676 1280,690 1320,699 1360,704 1410,706 1550,707 1575,700 1610,693 1650,684 1680,672 1700,659 1760,645 1820,620 1890,603 1960,590 2010,574 2060,559 2090,552 2115,552 2150,562 2188,567", "spring", 5]
].forEach(([p, c, w, d]) => curve(price, p, C[c], w, d));

/* trade links and entry arrow */
["2122,778 2140,745 2160,728", "2130,868 2142,820 2152,780 2166,735", "2148,820 2158,770 2167,738"].forEach(p => curve(price, p, C.blue, 2, DASH));
line(price, 2190, 727, 2250, 727, C.blue, 4);
make(price, "ellipse", { cx: 2176, cy: 721, rx: 17, ry: 16, fill: C.black, stroke: C.aqua, "stroke-width": 2, "stroke-dasharray": "8 10" });
line(price, 2158, 721, 2196, 721, C.white, 4, "6 4");
make(price, "path", { d: "M2164 723L2180 710V736Z", fill: C.white });
make(price, "path", { d: "M2168 724L2178 716V732Z", fill: "#ff0a1e" });

/* session verticals */
const verticals = (svg, top, bottom, first) => {
  [[2211, "#ff20ff"], [2219, "#ff4520"], [2275, C.dodger], [2315, C.white], [2371, C.blue]]
    .forEach(([x, c]) => line(svg, x, x === 2371 ? top : first, x, bottom, c, 2, DASH));
  [[2435, C.navy], [2443, C.sage]].forEach(([x, c]) => line(svg, x, top, x, bottom, c, 2, "36 12"));
};
line(price, 739, 47, 739, FLOOR, "#b0a8a8", 2, DASH);
line(price, 739, 5, 739, FLOOR, C.spring, 2, "36 12");
line(price, 745, 375, 745, 738, C.sage, 2, DASH);
line(price, MON13, 47, MON13, 1050, "#b4b4b4", 2, DASH);
verticals(price, 5, FLOOR, 41);
[[2430, C.navy], [2438, C.sage]].forEach(([x, c]) => [5, 1098].forEach(y =>
  make(price, "rect", { x: x + 1, y: y + 1, width: 8, height: 8, fill: C.white, stroke: c, "stroke-width": 2 })));
make(price, "path", { d: "M2189 5H2209L2199 15Z", fill: C.aqua });

/* labels */
const G0 = "#73b361", LG = "#90ee90", SG = "#3cb371", LC = "#f08080", RB = "#bc8f8f";
[
  [738, 34, "R138", G0], [738, 204, "R100", C.g1], [738, 301, "R78", C.g2], [738, 374, "R61", C.g3], [738, 480, "R38", C.g4],
  [738, 650, "W1", C.cream], [738, 820, "S38", C.p1], [738, 926, "S61", C.p2], [738, 1000, "S78", C.p3], [738, 1096, "S100", C.p3],
  [1698, 54, "R61", C.g3], [1698, 210, "R38", C.g4], [1698, 462, "W1", C.cream], [1698, 716, "S38", C.p1], [1698, 872, "S61", C.p2], [1698, 982, "S78", C.p3],
  [2180, 55, "Wk Ex Hi 2", LG], [2180, 184, "Wk Ex Hi 1", LG], [2189, 316, "Wk Hi", LG], [2184, 450, "Wk Mid Hi", SG],
  [2184, 710, "Wk Mid Lo", LC], [2190, 844, "Wk Lo", RB], [2180, 974, "Wk Ex Lo 1", RB], [2180, 1106, "Wk Ex Lo 2", RB]
].forEach(([x, y, t, fill]) => make(price, "text", { x, y, fill }, t));
[[157, "#20ffff", "1.07651"], [712, C.black, "1.05871"]].forEach(([y, c, t]) => {
  line(price, 2228, y + 12, 2249, y + 12, c);
  make(price, "rect", { x: 2249, y: y + 1, width: 82, height: 24, fill: "none", stroke: c, "stroke-width": 2 });
  make(price, "text", { x: 2253, y: y + 20, fill: c, style: "font-size:20px" }, t);
});

/* indicator pane */
const flow = document.getElementById("flow");
curve(flow, "10,1164 178,1164 230,1157 250,1152 1560,1152 1600,1146 2186,1146", C.sky, 2, THIN);
curve(flow, "10,1200 180,1200 250,1194 445,1194 458,1202 950,1202 1056,1220 1540,1222 1560,1219 1932,1219 1970,1207 2000,1196 2040,1180 2072,1174 2156,1174 2165,1186 2172,1198 2186,1222", "#ffcc32", 2, THIN);
curve(flow, "10,1234 390,1234 440,1236 455,1248 470,1252 980,1252 1010,1260 1040,1275 1065,1291 1935,1292 1960,1280 2000,1248 2040,1220 2080,1202 2090,1200 2150,1200 2162,1220 2172,1250 2180,1280 2187,1302", "#fa8072", 2, THIN);
const parts = [
  "w10,1168 18,1166 30,1178 42,1180 55,1198 60,1200", "p60,1199 72,1213 90,1228 101,1232 115,1222 135,1212 147,1203",
  "w147,1203 155,1185 170,1168 185,1140 195,1118 205,1105 225,1105 232,1118 240,1140 255,1167 285,1181 305,1192",
  "p308,1191 325,1206 342,1220 358,1226 372,1240 382,1240 395,1260 410,1259 420,1258 431,1269 445,1256 470,1244 490,1230 510,1218 532,1205",
  "w536,1203 545,1196 590,1198 612,1200 625,1192 640,1180 680,1174 705,1162 738,1163 750,1171 772,1173 785,1168 800,1151 812,1147 825,1153 860,1157 900,1162 920,1172 935,1185 945,1200",
  "p948,1202 960,1210 978,1216 990,1250 1000,1290 1010,1318 1022,1328 1045,1315 1060,1305 1075,1285 1110,1268 1140,1245 1180,1222 1207,1204",
  "w1210,1203 1250,1200 1290,1187 1340,1185 1390,1182 1430,1173 1500,1178 1545,1170 1562,1140 1580,1131 1610,1143 1650,1165 1680,1145 1700,1127 1715,1140 1735,1162 1770,1148 1810,1143 1840,1158 1870,1170 1905,1175 1925,1180 1945,1192 1970,1195 1985,1183 2000,1195",
  "p2003,1196 2015,1203 2032,1205 2045,1195 2055,1187 2070,1187 2092,1195 2098,1220 2105,1260 2115,1300 2130,1360 2145,1392 2160,1401 2175,1388 2188,1376"
];
const all = parts.map(p => p.slice(1)).join(" ").split(" ").map(p => p.split(",").map(Number));
const lagged = all.map(([x, y], i) => {
  const near = all.slice(Math.max(0, i - 1), i + 2);
  return [x + 14, near.reduce((s, p) => s + p[1], 0) / near.length];
}).filter(p => p[0] < 2176);
curve(flow, "10,1184 " + lagged.map(p => p.join()).join(" ") + " 2177,1380", "#262626", 6);
parts.forEach(p => curve(flow, p.slice(1), p[0] === "w" ? "#d8d8d8" : "#5a0a5e", p[0] === "w" ? 6 : 8));

const lines = document.getElementById("flow-lines");
line(lines, 739, 1113, 739, 1413, C.spring, 2, "36 12");
line(lines, 2179, 1113, 2179, 1413, "#8c8c8c", 2, "36 12");
verticals(lines, 1113, 1413, 1113);
```
